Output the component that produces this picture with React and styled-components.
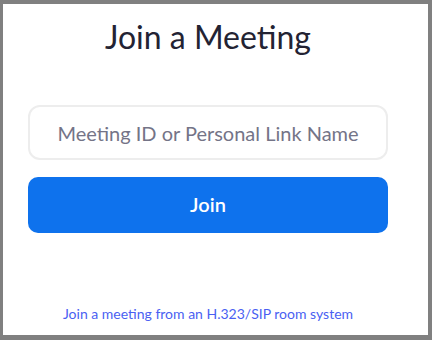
import React from "react";
import styled, { createGlobalStyle } from "styled-components";

const Global = createGlobalStyle`
  html, body { margin: 0; padding: 0; background: #808080; }
  body { font-family: Lato, "Open Sans", sans-serif; }
`;

const Frame = styled.div`
  width: 432px;
  height: 340px;
  box-sizing: border-box;
  padding: 4px 4px 5px 3px;
  background: #808080;
`;

const Panel = styled.div`
  height: 100%;
  box-sizing: border-box;
  background: #ffffff;
  padding: 13px 40px 0 25px;
  display: flex;
  flex-direction: column;
  align-items: stretch;
`;

const Title = styled.h1`
  margin: 0;
  font-family: Lato, sans-serif;
  font-weight: 400;
  font-size: 32px;
  line-height: normal;
  color: #232333;
  text-align: center;
`;

const Input = styled.input`
  margin-top: 49px;
  height: 55px;
  box-sizing: border-box;
  border: 2px solid #ededed;
  border-radius: 12px;
  background: #fff;
  font-family: Lato, sans-serif;
  font-size: 20px;
  text-align: center;
  outline: none;
  padding: 0 12px;
  color: #232333;
  &::placeholder { color: #747487; opacity: 1; }
`;

const JoinButton = styled.button`
  margin-top: 17px;
  height: 56px;
  padding: 0 0 3px;
  border: none;
  border-radius: 10px;
  background: #0e72ed;
  color: #ffffff;
  font-family: Lato, sans-serif;
  font-weight: 600;
  font-size: 20px;
  cursor: pointer;
`;

const RoomLink = styled.a`
  margin-top: 72px;
  align-self: center;
  font-family: Lato, sans-serif;
  font-size: 14px;
  line-height: normal;
  color: #4a5ff2;
  text-decoration: none;
  cursor: pointer;
`;

export default function App() {
  return (
    <>
      <Global />
      <Frame>
        <Panel>
          <Title>Join a Meeting</Title>
          <Input placeholder="Meeting ID or Personal Link Name" />
          <JoinButton>Join</JoinButton>
          <RoomLink>Join a meeting from an H.323/SIP room system</RoomLink>
        </Panel>
      </Frame>
    </>
  );
}
